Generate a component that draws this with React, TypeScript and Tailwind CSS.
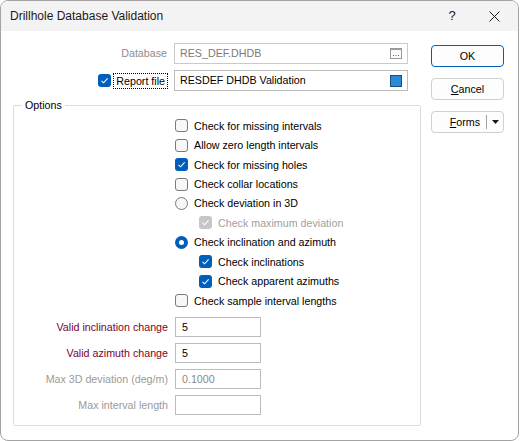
import type { ReactNode } from 'react';

function CheckBox({ checked = false, disabled = false }: { checked?: boolean; disabled?: boolean }) {
  if (checked) {
    return (
      <span
        className={`w-[13px] h-[13px] rounded-[3px] flex items-center justify-center shrink-0 ${
          disabled ? 'bg-[#c6c6c6]' : 'bg-[#005fb8]'
        }`}
      >
        <svg width="9" height="9" viewBox="0 0 9 9">
          <path d="M1.5 4.8 L3.6 6.8 L7.6 2.4" fill="none" stroke="white" strokeWidth="1.1" />
        </svg>
      </span>
    );
  }
  return <span className="w-[13px] h-[13px] rounded-[3px] border border-[#7a7a7a] bg-[#f7f7f7] shrink-0" />;
}

function Radio({ checked = false }: { checked?: boolean }) {
  if (checked) {
    return (
      <span className="w-[13px] h-[13px] rounded-full bg-[#005fb8] flex items-center justify-center shrink-0">
        <span className="w-[5px] h-[5px] rounded-full bg-white" />
      </span>
    );
  }
  return <span className="w-[13px] h-[13px] rounded-full border border-[#7a7a7a] bg-[#f7f7f7] shrink-0" />;
}

function Option({ children, indent = false, muted = false }: { children: ReactNode; indent?: boolean; muted?: boolean }) {
  return (
    <div
      className={`h-[19.45px] flex items-center gap-[6px] ${indent ? 'pl-[185px]' : 'pl-[161px]'} ${
        muted ? 'text-[#a0a0a0]' : 'text-black'
      }`}
    >
      {children}
    </div>
  );
}

function Field({ label, value, tone }: { label: string; value: string; tone: 'red' | 'grey' }) {
  return (
    <div className="h-[26px] flex items-start">
      <span
        className={`w-[154px] h-[20px] flex items-center justify-end ${
          tone === 'red' ? 'text-[#800028]' : 'text-[#9a9a9a]'
        }`}
      >
        {label}
      </span>
      <span
        className={`ml-[7px] w-[86px] h-[20px] border border-[#bcbcbc] flex items-center pl-[6px] ${
          tone === 'red' ? 'text-black' : 'text-[#8a8a8a]'
        }`}
      >
        {value}
      </span>
    </div>
  );
}

export default function App() {
  return (
    <div className="w-[520px] h-[441px] bg-white font-['Liberation_Sans',Arial,sans-serif] text-[10.7px] text-black">
      <div className="w-[519px] h-[441px] border border-[#a3a3a3] rounded-[8px] overflow-hidden bg-white flex flex-col">
        {/* title bar */}
        <div className="h-[30px] bg-[#f3f3f3] flex items-center pl-[9px] shrink-0">
          <span className="text-[12px] text-[#1a1a1a]">Drillhole Database Validation</span>
          <span className="ml-auto text-[13px] text-[#1a1a1a] w-[20px] text-center">?</span>
          <span className="ml-[27px] mr-[18px] text-[#1a1a1a]">
            <svg width="11" height="11" viewBox="0 0 11 11">
              <path d="M0.5 0.5 L10.5 10.5 M10.5 0.5 L0.5 10.5" stroke="#1a1a1a" strokeWidth="1" />
            </svg>
          </span>
        </div>

        <div className="flex">
          {/* left column */}
          <div className="w-[419px] pt-[12px]">
            <div className="flex items-center h-[20px]">
              <span className="w-[166px] text-right text-[#8c8c8c]">Database</span>
              <div className="ml-[7px] w-[234px] h-[21px] border border-[#cacaca] flex items-center pl-[5px] pr-[5px] text-[#7a7a7a]">
                <span>RES_DEF.DHDB</span>
                <svg className="ml-auto" width="12" height="11" viewBox="0 0 12 11">
                  <rect x="0.5" y="0.5" width="11" height="10" fill="#fbfbfb" stroke="#9a9a9a" />
                  <line x1="1" y1="1.5" x2="11" y2="1.5" stroke="#9a9a9a" />
                  <rect x="3" y="7" width="1" height="1" fill="#666" />
                  <rect x="5.5" y="7" width="1" height="1" fill="#666" />
                  <rect x="8" y="7" width="1" height="1" fill="#666" />
                </svg>
              </div>
            </div>

            <div className="flex items-center h-[21px] mt-[7px]">
              <div className="w-[166px] flex items-center justify-end gap-[3px]">
                <CheckBox checked />
                <span className="outline outline-1 outline-dotted outline-black px-[2px] leading-[14px]">Report file</span>
              </div>
              <div className="ml-[7px] w-[234px] h-[21px] border border-[#bcbcbc] flex items-center pl-[5px] pr-[5px]">
                <span>RESDEF DHDB Validation</span>
                <span className="ml-auto w-[12px] h-[12px] bg-[#2a8ad6] border border-[#1d4d78]" />
              </div>
            </div>

            {/* options group */}
            <div className="relative ml-[12px] mt-[14px] w-[408px] h-[321px] border border-[#dcdcdc] rounded-[2px] pt-[10px]">
              <span className="absolute left-[8px] top-[-8px] bg-white px-[3px] leading-[14px]">Options</span>
              <Option>
                <CheckBox />
                <span>Check for missing intervals</span>
              </Option>
              <Option>
                <CheckBox />
                <span>Allow zero length intervals</span>
              </Option>
              <Option>
                <CheckBox checked />
                <span>Check for missing holes</span>
              </Option>
              <Option>
                <CheckBox />
                <span>Check collar locations</span>
              </Option>
              <Option>
                <Radio />
                <span>Check deviation in 3D</span>
              </Option>
              <Option indent muted>
                <CheckBox checked disabled />
                <span>Check maximum deviation</span>
              </Option>
              <Option>
                <Radio checked />
                <span>Check inclination and azimuth</span>
              </Option>
              <Option indent>
                <CheckBox checked />
                <span>Check inclinations</span>
              </Option>
              <Option indent>
                <CheckBox checked />
                <span>Check apparent azimuths</span>
              </Option>
              <Option>
                <CheckBox />
                <span>Check sample interval lengths</span>
              </Option>

              <div className="mt-[7px]">
                <Field label="Valid inclination change" value="5" tone="red" />
                <Field label="Valid azimuth change" value="5" tone="red" />
                <Field label="Max 3D deviation (deg/m)" value="0.1000" tone="grey" />
                <Field label="Max interval length" value="" tone="grey" />
              </div>
            </div>
          </div>

          {/* buttons */}
          <div className="ml-[11px] pt-[14px] flex flex-col gap-[11px]">
            <button className="w-[73px] h-[22px] rounded-[4px] border border-[#005fb8] bg-[#fdfdfd] flex items-center justify-center">
              OK
            </button>
            <button className="w-[73px] h-[22px] rounded-[4px] border border-[#d0d0d0] bg-[#fdfdfd] flex items-center justify-center">
              <span>
                <span className="underline">C</span>ancel
              </span>
            </button>
            <button className="w-[73px] h-[22px] rounded-[4px] border border-[#d0d0d0] bg-[#fdfdfd] flex items-center">
              <span className="flex-1 text-right pr-[6px]">
                <span className="underline">F</span>orms
              </span>
              <span className="w-px h-[14px] bg-[#a0a0a0]" />
              <span className="w-[16px] flex justify-center">
                <svg width="7" height="4" viewBox="0 0 7 4">
                  <path d="M0 0 H7 L3.5 4 Z" fill="#1a1a1a" />
                </svg>
              </span>
            </button>
          </div>
        </div>
      </div>
    </div>
  );
}
